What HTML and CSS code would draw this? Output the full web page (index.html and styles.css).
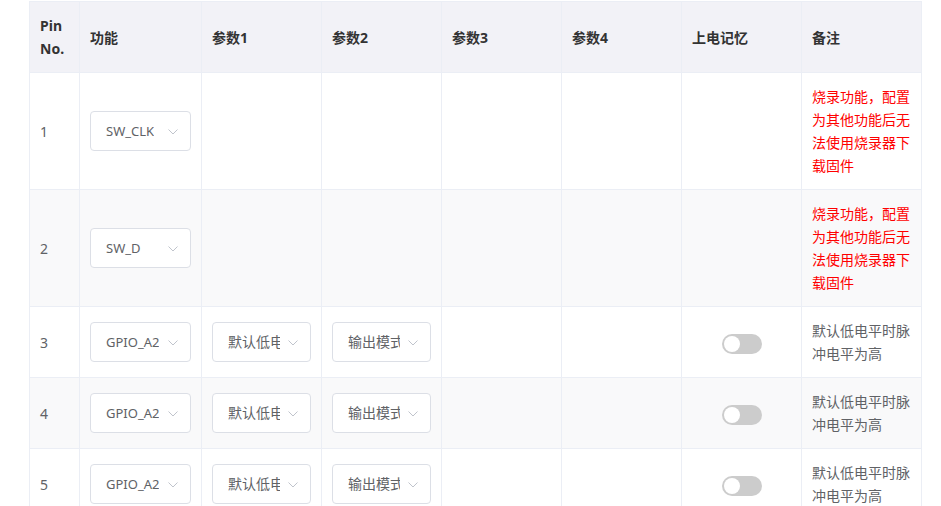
FILE: index.html
```html
<!DOCTYPE html>
<html lang="zh-CN">
<head>
<meta charset="utf-8">
<link rel="stylesheet" href="styles.css">
</head>
<body>
<table class="pin-table">
  <colgroup>
    <col class="c-pin"><col class="c-func"><col class="c-p"><col class="c-p"><col class="c-p"><col class="c-p"><col class="c-p"><col class="c-p">
  </colgroup>
  <thead>
    <tr>
      <th>Pin No.</th><th>功能</th><th>参数1</th><th>参数2</th><th>参数3</th><th>参数4</th><th>上电记忆</th><th>备注</th>
    </tr>
  </thead>
  <tbody>
    <tr>
      <td>1</td>
      <td><div class="select"><span class="val latin">SW_CLK</span><svg class="arrow" viewBox="0 0 10 6"><path d="M0.5 0.5 L5 5 L9.5 0.5"/></svg></div></td>
      <td></td><td></td><td></td><td></td><td></td>
      <td class="note red">烧录功能，配置为其他功能后无法使用烧录器下载固件</td>
    </tr>
    <tr class="stripe">
      <td>2</td>
      <td><div class="select"><span class="val latin">SW_D</span><svg class="arrow" viewBox="0 0 10 6"><path d="M0.5 0.5 L5 5 L9.5 0.5"/></svg></div></td>
      <td></td><td></td><td></td><td></td><td></td>
      <td class="note red">烧录功能，配置为其他功能后无法使用烧录器下载固件</td>
    </tr>
    <tr>
      <td>3</td>
      <td><div class="select"><span class="val latin">GPIO_A2</span><svg class="arrow" viewBox="0 0 10 6"><path d="M0.5 0.5 L5 5 L9.5 0.5"/></svg></div></td>
      <td><div class="select"><span class="val">默认低电平</span><svg class="arrow" viewBox="0 0 10 6"><path d="M0.5 0.5 L5 5 L9.5 0.5"/></svg></div></td>
      <td><div class="select"><span class="val">输出模式</span><svg class="arrow" viewBox="0 0 10 6"><path d="M0.5 0.5 L5 5 L9.5 0.5"/></svg></div></td>
      <td></td><td></td>
      <td class="center"><span class="switch"></span></td>
      <td class="note">默认低电平时脉冲电平为高</td>
    </tr>
    <tr class="stripe">
      <td>4</td>
      <td><div class="select"><span class="val latin">GPIO_A2</span><svg class="arrow" viewBox="0 0 10 6"><path d="M0.5 0.5 L5 5 L9.5 0.5"/></svg></div></td>
      <td><div class="select"><span class="val">默认低电平</span><svg class="arrow" viewBox="0 0 10 6"><path d="M0.5 0.5 L5 5 L9.5 0.5"/></svg></div></td>
      <td><div class="select"><span class="val">输出模式</span><svg class="arrow" viewBox="0 0 10 6"><path d="M0.5 0.5 L5 5 L9.5 0.5"/></svg></div></td>
      <td></td><td></td>
      <td class="center"><span class="switch"></span></td>
      <td class="note">默认低电平时脉冲电平为高</td>
    </tr>
    <tr>
      <td>5</td>
      <td><div class="select"><span class="val latin">GPIO_A2</span><svg class="arrow" viewBox="0 0 10 6"><path d="M0.5 0.5 L5 5 L9.5 0.5"/></svg></div></td>
      <td><div class="select"><span class="val">默认低电平</span><svg class="arrow" viewBox="0 0 10 6"><path d="M0.5 0.5 L5 5 L9.5 0.5"/></svg></div></td>
      <td><div class="select"><span class="val">输出模式</span><svg class="arrow" viewBox="0 0 10 6"><path d="M0.5 0.5 L5 5 L9.5 0.5"/></svg></div></td>
      <td></td><td></td>
      <td class="center"><span class="switch"></span></td>
      <td class="note">默认低电平时脉冲电平为高</td>
    </tr>
  </tbody>
</table>
</body>
</html>
```

FILE: styles.css
```css
html, body {
  margin: 0;
  padding: 0;
  background: #ffffff;
}
body {
  padding: 1px 0 0 29px;
  font-family: "Noto Sans", "Noto Sans CJK SC", sans-serif;
  font-size: 14px;
  color: #606266;
}
.pin-table {
  border-collapse: collapse;
  table-layout: fixed;
  width: 893px;
}
.c-pin { width: 50px; }
.c-func { width: 122px; }
.c-p { width: 120px; }
.pin-table th,
.pin-table td {
  border: 1px solid #ebeef5;
  padding: 12px 10px;
  line-height: 23px;
  text-align: left;
  vertical-align: middle;
  box-sizing: border-box;
}
.pin-table th {
  background: #f2f2f7;
  color: #333333;
  font-weight: bold;
  height: 71px;
}
.pin-table tbody tr.stripe td {
  background: #f9f9fa;
}
.pin-table td {
  font-size: 14px;
}
.note {
  color: #606266;
}
.note.red {
  color: #ff0000;
}
.center {
  text-align: center !important;
}
.select {
  position: relative;
  box-sizing: border-box;
  width: 100%;
  height: 40px;
  border: 1px solid #dcdfe6;
  border-radius: 4px;
  background: #ffffff;
  padding: 0 30px 0 15px;
  display: flex;
  align-items: center;
}
.select .val {
  display: block;
  white-space: nowrap;
  overflow: hidden;
  color: #606266;
  line-height: 38px;
}
.select .val.latin {
  font-size: 13px;
}
.select .arrow {
  position: absolute;
  right: 12px;
  top: 17px;
  width: 10px;
  height: 6px;
  fill: none;
  stroke: #c0c4cc;
  stroke-width: 1;
}
.switch {
  display: inline-block;
  position: relative;
  width: 40px;
  height: 20px;
  border-radius: 10px;
  background: #cccccc;
  vertical-align: middle;
}
.switch::after {
  content: "";
  position: absolute;
  left: 2px;
  top: 2px;
  width: 16px;
  height: 16px;
  border-radius: 50%;
  background: #ffffff;
}
```
